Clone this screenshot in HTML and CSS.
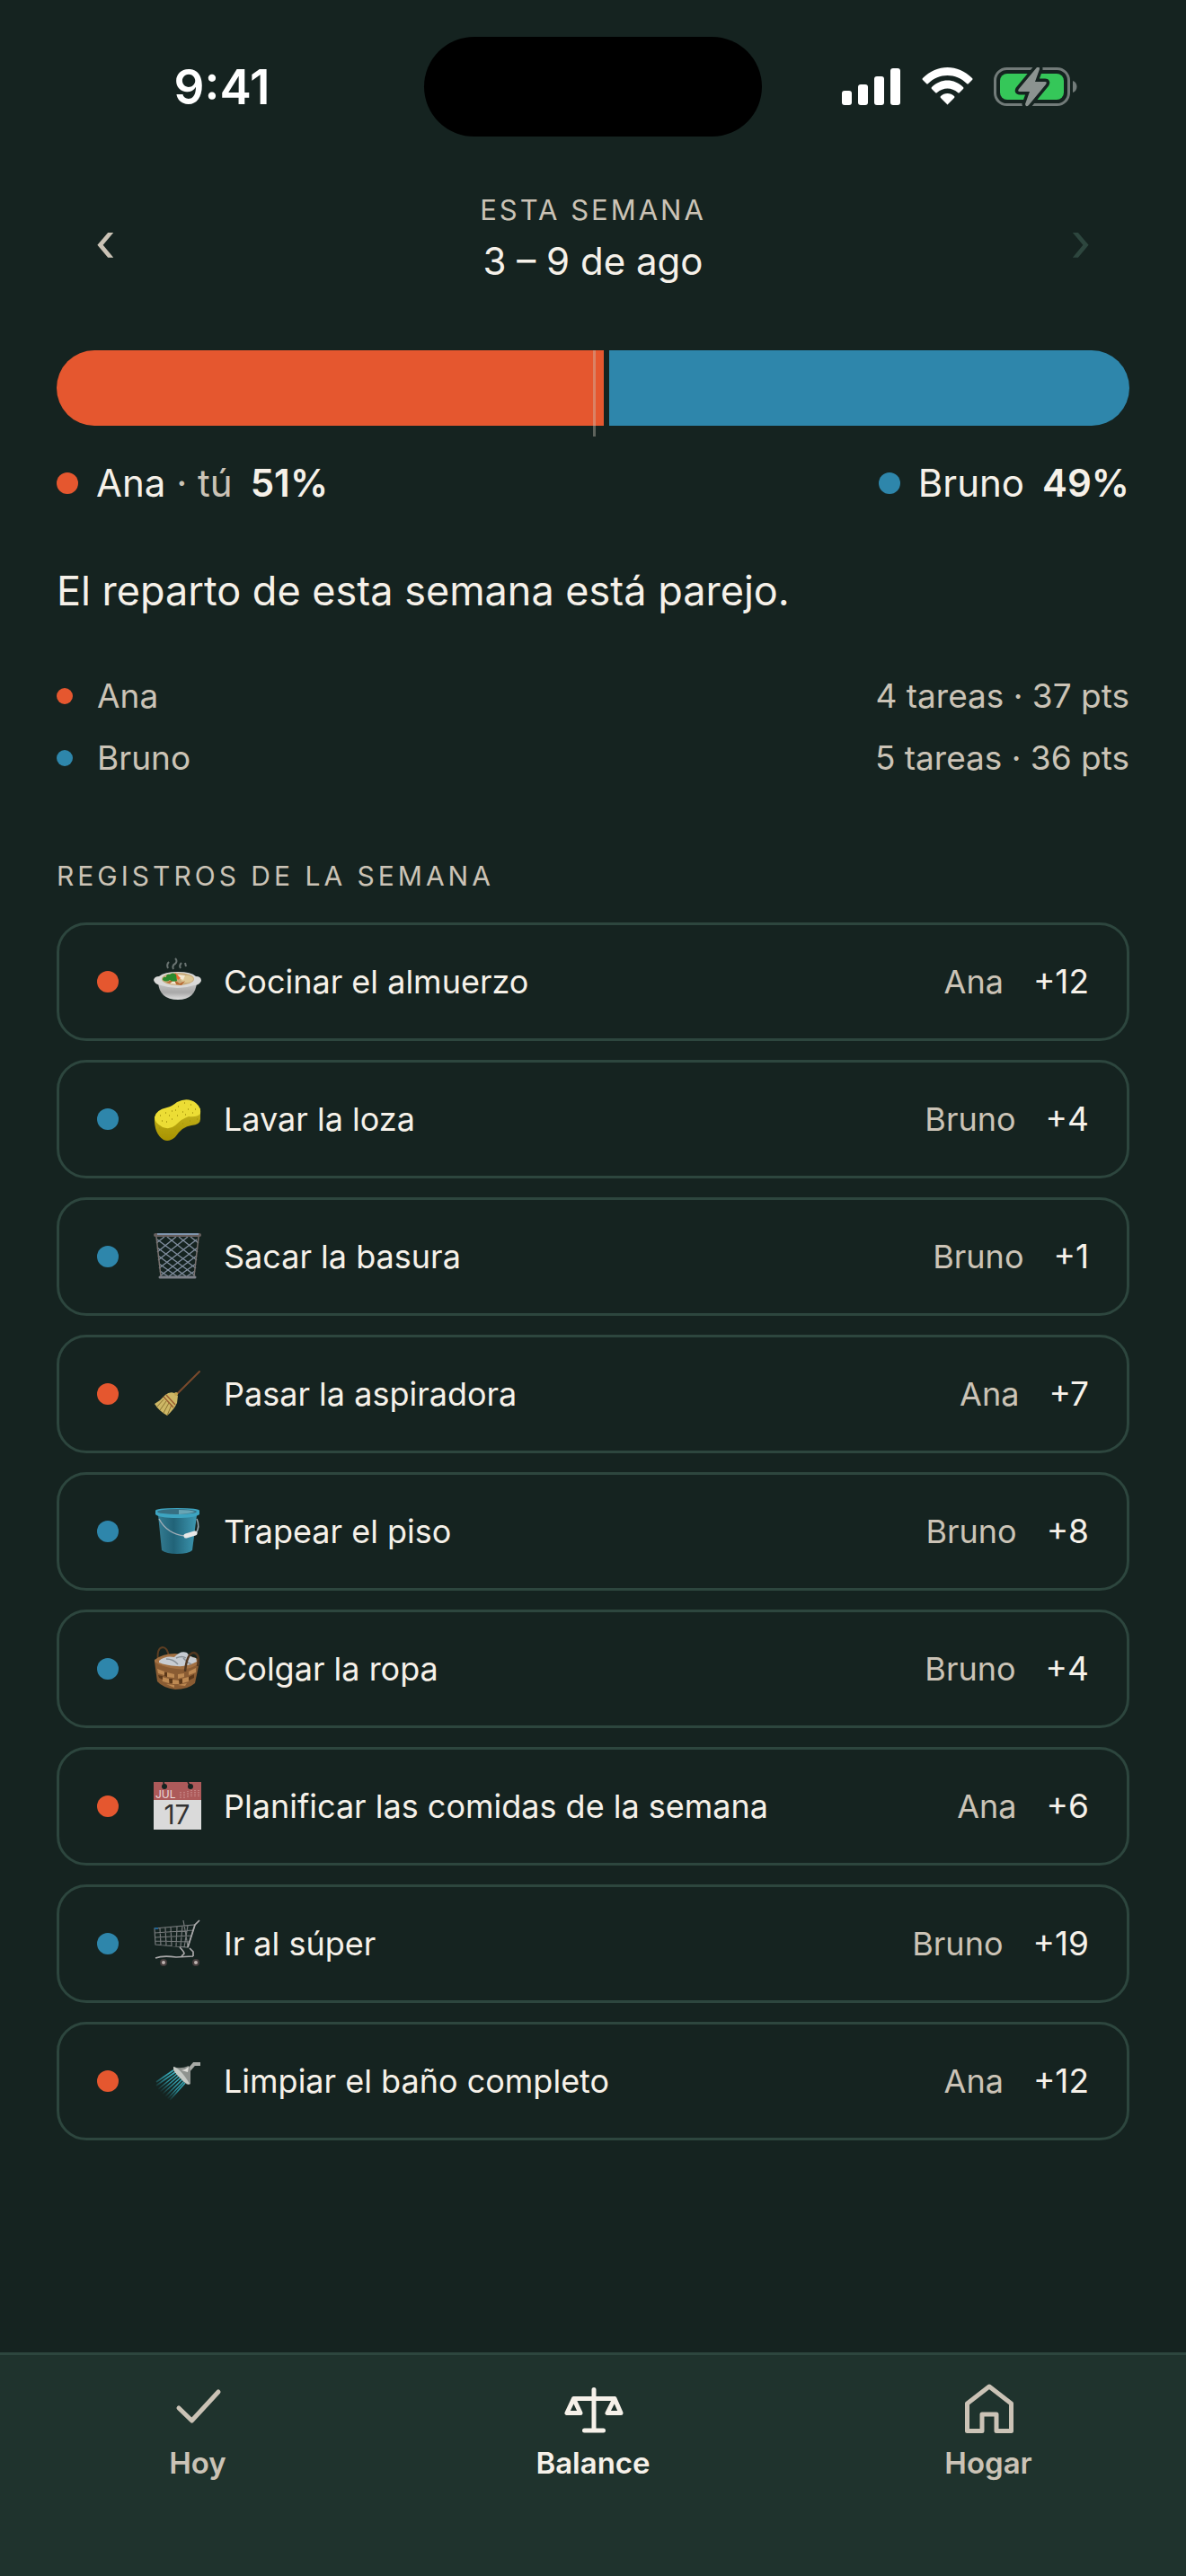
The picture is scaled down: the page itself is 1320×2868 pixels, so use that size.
FILE: index.html
```html
<!DOCTYPE html>
<html lang="es">
<head>
    <meta charset="UTF-8" />
    <meta name="viewport" content="width=device-width, initial-scale=1.0"/>
    <title>Balance de la semana</title>
    <link rel="stylesheet" href="styles.css">
</head>
<body>
    <!-- STATUS BAR -->
    <div class="status-bar">
        <div class="status-time">9:41</div>
        <div class="island"></div>
        <div class="status-icons">
            <svg width="66" height="44" viewBox="0 0 66 44" fill="#fff">
                <rect x="0" y="26" width="11" height="16" rx="3"/>
                <rect x="18" y="19" width="11" height="23" rx="3"/>
                <rect x="36" y="10" width="11" height="32" rx="3"/>
                <rect x="54" y="1" width="11" height="41" rx="3"/>
            </svg>
            <svg width="57" height="44" viewBox="0 0 57 44" fill="#fff">
                <path d="M1 14 Q0 13 1 12 C17 -4 40 -4 56 12 Q57 13 56 14 L52 18 Q51 19 50 18 C38 6 19 6 7 18 Q6 19 5 18 Z"/>
                <path d="M11 24 Q10 23 11 22 C21 12 36 12 46 22 Q47 23 46 24 L42 28 Q41 29 40 28 C33 22 24 22 17 28 Q16 29 15 28 Z"/>
                <path d="M21 34 Q20 33 21 32 C25 28 32 28 36 32 Q37 33 36 34 L29 41 Q28.500 42 28 41 Z"/>
            </svg>
            <svg width="93" height="44" viewBox="0 0 93 44">
                <rect x="1.500" y="1.500" width="82" height="40" rx="13" fill="none" stroke="#727b79" stroke-width="3"/>
                <rect x="7" y="7" width="71" height="29" rx="8" fill="#35c759"/>
                <path d="M88 15 C94 17 94 26 88 28 Z" fill="#727b79"/>
                <path d="M48 0 L28 24 Q26 27 29 27 H40 L35 41 Q36 45 39 42 L58 19 Q60 16 57 16 H46 L51 2 Q51 -2 48 0 Z" fill="#8b9390" stroke="#152320" stroke-width="7" paint-order="stroke"/>
            </svg>
        </div>
    </div>

    <main class="content">
        <!-- WEEK SELECTOR -->
        <header class="week">
            <button class="week-btn" aria-label="Semana anterior">‹</button>
            <div class="week-title">
                <p class="eyebrow">ESTA SEMANA</p>
                <h1>3 – 9 de ago</h1>
            </div>
            <button class="week-btn" aria-label="Semana siguiente" disabled>›</button>
        </header>

        <!-- SPLIT BAR -->
        <div class="split">
            <div class="split-part ana" style="width: 51%"></div>
            <div class="split-part bruno"></div>
            <span class="split-middle"></span>
        </div>
        <div class="legend">
            <div class="legend-item"><span class="dot ana"></span><span>Ana <span class="muted">· tú</span></span><strong>51%</strong></div>
            <div class="legend-item"><span class="dot bruno"></span><span>Bruno</span><strong>49%</strong></div>
        </div>

        <p class="message">El reparto de esta semana está parejo.</p>

        <!-- TOTALS -->
        <ul class="totals">
            <li><span class="dot small ana"></span><span>Ana</span><span class="total-value">4 tareas · 37 pts</span></li>
            <li><span class="dot small bruno"></span><span>Bruno</span><span class="total-value">5 tareas · 36 pts</span></li>
        </ul>

        <h2 class="eyebrow section-title">REGISTROS DE LA SEMANA</h2>

        <!-- LOG -->
        <ul class="log">
            <li class="card">
                <span class="dot ana"></span>
                <svg class="emoji" viewBox="0 0 54 54">
                    <defs>
                        <linearGradient id="bowl" x2="0" y2="1"><stop stop-color="#c9c9c9"/><stop offset=".6" stop-color="#a8a8a8"/><stop offset="1" stop-color="#e0e0e0"/></linearGradient>
                    </defs>
                    <path d="M16 12 Q14 8 17 5 M22 13 Q20 9 24 7 Q27 4 24 1 M30 12 Q28 9 31 6 M36 10 L35 6" fill="none" stroke="#8f9795" stroke-width="2" opacity=".7"/>
                    <path d="M5 27 Q6 47 27 47 Q47 47 48 27 Z" fill="url(#bowl)"/>
                    <path d="M0 25 Q1 21 6 21 Q12 16 27 16 Q42 16 47 21 Q53 21 53 26 Q51 31 45 31 Q36 34 27 34 Q17 34 8 31 Q1 30 0 25 Z" fill="#d9d9d8"/>
                    <ellipse cx="27" cy="24" rx="18" ry="7" fill="#c9ac7c"/>
                    <ellipse cx="37" cy="24" rx="7" ry="4" fill="#dcc795"/>
                    <path d="M14 28 L22 24 L29 29 L35 26 L31 31 Z" fill="#b96b35"/>
                    <path d="M18 29 L23 25 L25 30 Z M27 19 L35 20 L33 25 L28 23 Z" fill="#f3e8d1"/>
                    <path d="M24 17 L30 23 L27 25 L23 19 Z" fill="#ee6a31"/>
                    <path d="M10 25 Q10 21 14 22 Q14 18 18 19 Q21 16 25 19 L26 26 Q21 28 18 25 Q14 28 10 25 Z" fill="#2a8a2d"/>
                </svg>
                <span class="task">Cocinar el almuerzo</span><span class="who">Ana</span><span class="points">+12</span>
            </li>
            <li class="card">
                <span class="dot bruno"></span>
                <svg class="emoji" viewBox="0 0 54 54">
                    <defs>
                        <linearGradient id="foam" x2="0" y2="1"><stop stop-color="#c5b51e"/><stop offset="1" stop-color="#a89300"/></linearGradient>
                    </defs>
                    <path d="M1 24 Q0 43 11 50 Q17 53 24 47 Q32 35 42 34 Q52 33 52 27 L52 15 Z" fill="url(#foam)"/>
                    <path d="M1 25 Q2 17 15 14 Q20 13 26 8 Q38 2 47 9 Q53 14 52 21 Q48 25 39 24 Q32 26 24 34 Q18 39 10 36 Q1 31 1 25 Z" fill="#ecdd35"/>
                    <path d="M7 23 H8 M13 20 H14 M20 18 H21 M27 13 H28 M34 9 H35 M41 11 H42 M46 16 H47 M38 16 H39 M32 19 H33 M26 23 H27 M20 27 H21 M14 30 H15 M9 29 H10 M43 20 H44 M17 23 H18 M24 17 H25 M35 22 H36 M6 37 H7 M12 44 H13 M18 45 H19 M24 40 H25 M32 32 H33 M40 29 H41 M48 27 H49" stroke="#a8960e" stroke-width="1.500"/>
                </svg>
                <span class="task">Lavar la loza</span><span class="who">Bruno</span><span class="points">+4</span>
            </li>
            <li class="card">
                <span class="dot bruno"></span>
                <svg class="emoji" viewBox="0 0 54 54" fill="none">
                    <path d="M3 12 L12 5 M4 22 L25 5 M5 31 L38 5 M6 40 L48 8 M8 48 L49 17 M17 49 L48 26 M27 49 L47 35 M37 49 L46 43 M50 12 L41 5 M49 22 L28 5 M48 31 L15 5 M47 40 L4 8 M46 48 L4 17 M36 49 L5 26 M26 49 L6 35 M16 49 L7 43" stroke="#7f8c9c" stroke-width="1.400"/>
                    <path d="M3 5 L8 49 M50 5 L45 49" stroke="#78716f" stroke-width="1.500"/>
                    <path d="M7 50 H46" stroke="#7b7f87" stroke-width="3" stroke-linecap="round"/>
                    <path d="M2 3 H51" stroke="#675f5e" stroke-width="4" stroke-linecap="round"/>
                    <path d="M4 2 H50" stroke="#88a8cb" stroke-width="1.500"/>
                </svg>
                <span class="task">Sacar la basura</span><span class="who">Bruno</span><span class="points">+1</span>
            </li>
            <li class="card">
                <span class="dot ana"></span>
                <svg class="emoji" viewBox="0 0 54 54">
                    <path d="M51 2 L25 28" stroke="#7a4a2c" stroke-width="2" stroke-linecap="round"/>
                    <path d="M23 26 L27 29 L26 37 Q23 44 15 51 Q6 46 1 38 Q8 34 13 28 Q18 24 23 26 Z" fill="#cdb765"/>
                    <path d="M15 51 L20 39 M11 48 L17 37 M7 45 L14 35 M4 41 L11 33" stroke="#8c7432" stroke-width="1"/>
                    <path d="M11 30 L22 42 M14 28 L24 39" stroke="#9a5d31" stroke-width="1.500"/>
                    <circle cx="25" cy="27" r="2" fill="#c3a650"/>
                </svg>
                <span class="task">Pasar la aspiradora</span><span class="who">Ana</span><span class="points">+7</span>
            </li>
            <li class="card">
                <span class="dot bruno"></span>
                <svg class="emoji" viewBox="0 0 54 54">
                    <defs>
                        <linearGradient id="bucket"><stop stop-color="#347c92"/><stop offset=".4" stop-color="#216378"/><stop offset="1" stop-color="#3d98b2"/></linearGradient>
                    </defs>
                    <path d="M5 9 L9 48 Q14 52 26 52 Q39 52 43 48 L48 9 Z" fill="url(#bucket)"/>
                    <path d="M2 4 Q2 1 26 1 Q51 1 51 4 V8 Q46 12 26 12 Q6 12 2 8 Z" fill="#3da4c1"/>
                    <ellipse cx="26" cy="5" rx="22" ry="3" fill="#376f82"/>
                    <path d="M28 3 Q42 3 46 5 Q42 7 28 8 Z" fill="#68a5b5"/>
                    <path d="M6 13 Q15 30 35 32 M47 29 Q52 22 48 13" fill="none" stroke="#9eacb6" stroke-width="1.500"/>
                    <path d="M36 32 L46 29" stroke="#e8e8e8" stroke-width="5" stroke-linecap="round"/>
                </svg>
                <span class="task">Trapear el piso</span><span class="who">Bruno</span><span class="points">+8</span>
            </li>
            <li class="card">
                <span class="dot bruno"></span>
                <svg class="emoji" viewBox="0 0 54 54">
                    <path d="M5 18 Q3 4 10 3 Q15 3 17 13" fill="none" stroke="#5e3e22" stroke-width="2"/>
                    <path d="M1 19 L4 41 Q10 48 24 50 Q38 50 46 43 L51 19 Z" fill="#8a5c33"/>
                    <path d="M4 27 L12 30 V34 L5 32 Z M15 31 L23 33 V37 L15 36 Z M27 33 L34 32 V36 L27 38 Z M39 30 L47 26 V31 L39 34 Z M9 36 L17 38 V43 L10 41 Z M20 39 L28 40 V44 L21 44 Z M31 38 L39 36 V41 L32 43 Z M14 44 L23 45 V48 Z M27 45 L37 43 L35 46 Z" fill="#bd8952"/>
                    <path d="M5 34 L10 35 V39 L6 37 Z M17 38 L21 38 V43 L18 43 Z M28 39 L32 38 V43 L29 44 Z M39 36 L45 33 V37 L39 40 Z M12 31 L15 31 V36 L12 35 Z" fill="#5b3819"/>
                    <path d="M1 17 Q10 10 24 10 Q43 12 51 17 L49 22 Q39 29 25 27 Q9 25 1 19 Z" fill="#a27042"/>
                    <path d="M6 18 Q13 12 23 14 Q30 6 37 9 Q40 14 47 15 L48 19 Q37 25 26 24 Q13 23 6 20 Z" fill="#c7ccd2"/>
                    <path d="M14 16 Q22 16 27 22 M25 15 Q32 12 36 15 M33 15 Q37 20 42 22" fill="none" stroke="#899097" stroke-width="1.500"/>
                    <path d="M35 30 Q37 9 45 9 Q52 11 49 24" fill="none" stroke="#513720" stroke-width="2.500"/>
                </svg>
                <span class="task">Colgar la ropa</span><span class="who">Bruno</span><span class="points">+4</span>
            </li>
            <li class="card">
                <span class="dot ana"></span>
                <svg class="emoji" viewBox="0 0 54 54">
                    <rect width="53" height="53" fill="#dadada"/>
                    <rect width="53" height="20" fill="#ad5a5a"/>
                    <circle cx="12" cy="5" r="3" fill="#152320"/>
                    <circle cx="41" cy="5" r="3" fill="#152320"/>
                    <path d="M11 0 L12 5 M38 0 L41 5" stroke="#152320" stroke-width="1.500"/>
                    <path d="M30 11 V18 M34 11 V18 M38 10 V18 M42 9 V17 M46 9 V17 M50 9 V16" stroke="#ca8d8d" stroke-width="1.500" stroke-dasharray="1 1"/>
                    <text x="2" y="18" font-size="12" fill="#e9dada">JUL</text>
                    <text x="26" y="47" font-size="30" text-anchor="middle" fill="#333">17</text>
                </svg>
                <span class="task">Planificar las comidas de la semana</span><span class="who">Ana</span><span class="points">+6</span>
            </li>
            <li class="card">
                <span class="dot bruno"></span>
                <svg class="emoji" viewBox="0 0 54 54" fill="none">
                    <path d="M1 10 L46 6 L38 31 L2 28 Z M1 15 L44 12 M1 20 L42 18 M2 24 L40 25 M7 10 L8 29 M13 9 L14 29 M19 8 L20 30 M26 8 L25 30 M32 7 L30 30 M38 7 L34 31 M33 1 L35 12 L38 30" stroke="#777b7c" stroke-width="1.200"/>
                    <path d="M51 1 L46 6 L38 31 M29 31 Q34 36 34 38 L31 41 M40 32 L44 36 V41 M2 43 Q10 40 25 42 L44 41" stroke="#aaa9aa" stroke-width="1.700"/>
                    <path d="M1 10 H5" stroke="#236493" stroke-width="2"/>
                    <circle cx="11" cy="48" r="3" fill="#bdb2b0" stroke="#453d3d" stroke-width="2"/>
                    <circle cx="47" cy="48" r="3" fill="#bdb2b0" stroke="#453d3d" stroke-width="2"/>
                </svg>
                <span class="task">Ir al súper</span><span class="who">Bruno</span><span class="points">+19</span>
            </li>
            <li class="card">
                <span class="dot ana"></span>
                <svg class="emoji" viewBox="0 0 54 54">
                    <defs>
                        <linearGradient id="spray" gradientUnits="userSpaceOnUse" x1="31" y1="20" x2="10" y2="42"><stop stop-color="#3fb4c3"/><stop offset=".5" stop-color="#2b8f9b"/><stop offset="1" stop-color="#2b8f9b" stop-opacity="0"/></linearGradient>
                    </defs>
                    <path d="M22 15 L3 28 M24 17 L3 32 M26 19 L5 36 M28 21 L7 39 M30 23 L9 42 M32 25 L12 45 M34 27 L15 47 M35 29 L18 48" fill="none" stroke="url(#spray)" stroke-width="1.600"/>
                    <path d="M52 8 H45 L39 15" fill="none" stroke="#a7aaa6" stroke-width="4"/>
                    <path d="M22 11 Q30 14 39 10 L41 14 L41 30 Q38 33 33 27 L22 15 Z" fill="#8f938f"/>
                    <path d="M22 11 Q30 13 40 30 Q36 31 30 24 Q21 16 22 11 Z" fill="#c6cac5"/>
                    <path d="M31 15 Q36 14 39 11 L38 17 Z" fill="#deded9"/>
                </svg>
                <span class="task">Limpiar el baño completo</span><span class="who">Ana</span><span class="points">+12</span>
            </li>
        </ul>
    </main>

    <!-- TAB BAR -->
    <nav class="tabs">
        <a href="#hoy" class="tab">
            <svg viewBox="0 0 72 72"><path d="M15 35 L29.500 49 L59 17"/></svg>
            Hoy
        </a>
        <a href="#balance" class="tab active">
            <svg viewBox="0 0 72 72"><path d="M37 14.500 V60 M26.500 60 H47.500 M14.500 24.500 H60 M14.500 24.500 L7 40.500 H22 Z M60 24.500 L52 40.500 H67 Z"/></svg>
            Balance
        </a>
        <a href="#hogar" class="tab">
            <svg viewBox="0 0 72 72"><path d="M12.500 30 L37 11 L61.500 30 V60.500 H45 V42 H29 V60.500 H12.500 Z"/></svg>
            Hogar
        </a>
    </nav>
</body>
</html>
```
FILE: styles.css
```css
* {
    margin: 0;
    padding: 0;
    box-sizing: border-box;
    font-family: Inter, 'Liberation Sans', sans-serif;
}

body {
    display: flex;
    flex-direction: column;
    min-height: 100vh;
    background: #152320;
    color: #f6f1e9;
    font-size: 36px;
    line-height: 48px;
}

ul {
    list-style: none;
}

/* status bar */
.status-bar {
    display: grid;
    grid-template-columns: 1fr 376px 1fr;
    align-items: center;
    padding: 41px 0 34px;
}

.status-time {
    padding-left: 22px;
    text-align: center;
    color: white;
    font-size: 53px;
    font-weight: 600;
}

.island {
    height: 111px;
    border-radius: 56px;
    background: black;
}

.status-icons {
    display: flex;
    justify-content: center;
    gap: 23px;
    padding-right: 32px;
}

.content {
    padding: 27px 63px 60px;
}

/* week selector */
.week {
    display: flex;
    align-items: center;
    justify-content: space-between;
    margin-bottom: 72px;
}

.week-title {
    text-align: center;
}

.week-title h1 {
    margin-top: 9px;
    font-size: 42px;
    font-weight: 400;
    line-height: 54px;
}

.eyebrow {
    color: #cbc3b6;
    font-size: 31px;
    font-weight: 400;
    letter-spacing: 3px;
    line-height: 42px;
}

.section-title {
    font-size: 30px;
    letter-spacing: 4px;
}

.week-btn {
    width: 108px;
    padding-top: 6px;
    background: none;
    border: none;
    color: #cbc3b6;
    font-size: 60px;
    line-height: 84px;
    cursor: pointer;
}

.week-btn:disabled {
    color: #2d463e;
    cursor: default;
}

/* split bar */
.split {
    position: relative;
    display: flex;
    gap: 6px;
    height: 84px;
}

.split-part:first-child {
    flex-shrink: 0;
    border-radius: 42px 0 0 42px;
}

.split-part:nth-child(2) {
    flex: 1;
    border-radius: 0 42px 42px 0;
}

.split-middle {
    position: absolute;
    top: 0;
    bottom: -12px;
    left: 50%;
    width: 3px;
    background: #cbc3b6;
    opacity: 0.4;
}

.ana {
    background: #e5572f;
}

.bruno {
    background: #2e86ab;
}

.dot {
    flex-shrink: 0;
    width: 24px;
    height: 24px;
    border-radius: 50%;
}

.dot.small {
    width: 18px;
    height: 18px;
    margin-right: 6px;
}

.muted {
    color: #cbc3b6;
}

.legend {
    display: flex;
    justify-content: space-between;
    margin-top: 37px;
    font-size: 42px;
    line-height: 54px;
}

.legend-item {
    display: flex;
    align-items: center;
    gap: 20px;
}

.legend-item strong {
    font-weight: 600;
}

.message {
    margin: 60px 0;
    font-size: 45px;
    line-height: 66px;
}

/* totals */
.totals {
    display: grid;
    gap: 21px;
    margin-bottom: 86px;
    color: #cbc3b6;
    font-size: 37px;
}

.totals li {
    display: flex;
    align-items: center;
    gap: 21px;
}

.total-value {
    margin-left: auto;
}

/* log */
.log {
    display: grid;
    gap: 21px;
    margin-top: 31px;
}

.card {
    display: flex;
    align-items: center;
    height: 132px;
    padding: 0 42px;
    border: 3px solid #2d463e;
    border-radius: 33px;
}

.emoji {
    width: 54px;
    height: 54px;
    margin: 0 24px 0 39px;
    overflow: visible;
}

.task {
    flex: 1;
}

.who {
    margin-right: 33px;
    color: #cbc3b6;
}

.points {
    font-size: 37px;
}

/* tab bar */
.tabs {
    display: grid;
    grid-template-columns: repeat(3, 1fr);
    margin-top: auto;
    padding: 24px 0 102px;
    border-top: 3px solid #2d463e;
    background: #1f332d;
}

.tab {
    display: flex;
    flex-direction: column;
    align-items: center;
    color: #cbc3b6;
    font-size: 33px;
    font-weight: 600;
    text-decoration: none;
}

.tab.active {
    color: #f6f1e9;
}

.tab svg {
    width: 72px;
    height: 72px;
    fill: none;
    stroke: currentColor;
    stroke-width: 5;
    stroke-linecap: round;
    stroke-linejoin: round;
}
```
